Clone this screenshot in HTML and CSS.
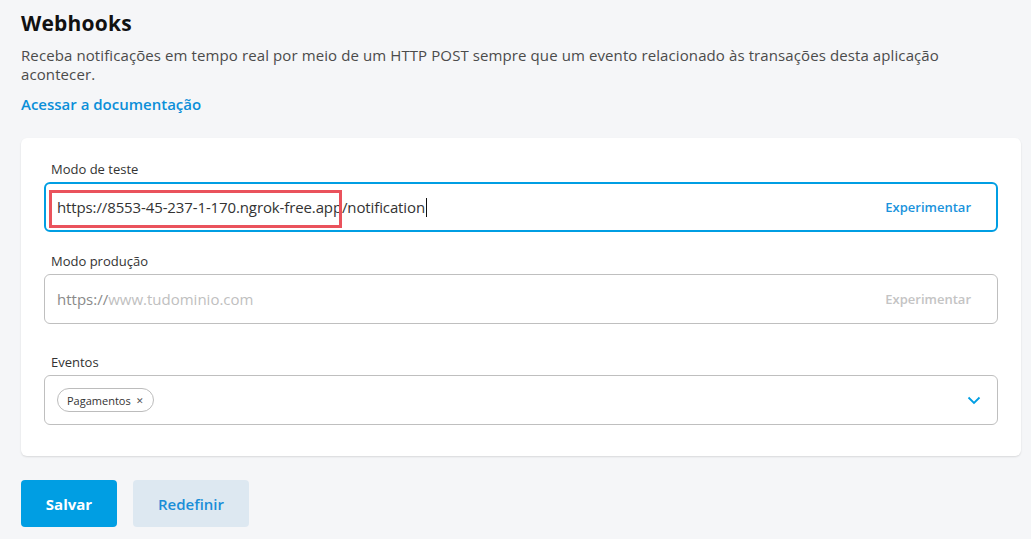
FILE: index.html
```html
<!DOCTYPE html>
<html lang="pt-BR">
<head>
<meta charset="utf-8">
<title>Webhooks</title>
<link rel="stylesheet" href="styles.css">
</head>
<body>
<main class="page">
  <h1 class="title">Webhooks</h1>
  <p class="desc">Receba notificações em tempo real por meio de um HTTP POST sempre que um evento relacionado às transações desta aplicação acontecer.</p>
  <a class="doc-link" href="#">Acessar a documentação</a>

  <section class="card">
    <div class="field">
      <label class="label">Modo de teste</label>
      <div class="input input-focus">
        <span class="value">https://8553-45-237-1-170.ngrok-free.app/notification<span class="caret"></span></span>
        <span class="action">Experimentar</span>
        <span class="highlight"></span>
      </div>
    </div>
    <div class="field">
      <label class="label">Modo produção</label>
      <div class="input">
        <span class="placeholder"><span class="prefix">https://</span>www.tudominio.com</span>
        <span class="action action-disabled">Experimentar</span>
      </div>
    </div>
    <div class="field field-events">
      <label class="label">Eventos</label>
      <div class="input select">
        <span class="chip">Pagamentos <span class="chip-x">&#x2715;</span></span>
        <svg class="chevron" width="14" height="9" viewBox="0 0 14 9"><path d="M1.5 1.5 L7 7 L12.5 1.5" fill="none" stroke="#009ee3" stroke-width="1.8"/></svg>
      </div>
    </div>
  </section>

  <div class="buttons">
    <button class="btn btn-primary">Salvar</button>
    <button class="btn btn-secondary">Redefinir</button>
  </div>
</main>
</body>
</html>
```

FILE: styles.css
```css
* { box-sizing: border-box; }
html, body { margin: 0; padding: 0; }
body {
  background: #f5f6f8;
  font-family: "Open Sans", "Liberation Sans", sans-serif;
  color: #333;
}
.page {
  padding: 9px 10px 0 21px;
}
.title {
  margin: 0;
  font-size: 21px;
  font-weight: 700;
  line-height: 28px;
  color: #111;
  letter-spacing: 0.2px;
}
.desc {
  margin: 9px 0 0;
  font-size: 15px;
  line-height: 19px;
  color: #4b4b4b;
  max-width: 960px;
  letter-spacing: 0.1px;
}
.doc-link {
  display: inline-block;
  margin-top: 10px;
  font-size: 15px;
  line-height: 20px;
  color: #0b8fd8;
  font-weight: 600;
  text-decoration: none;
}
.card {
  margin-top: 23px;
  width: 1000px;
  background: #fff;
  border-radius: 6px;
  box-shadow: 0 1px 2px rgba(0,0,0,0.12);
  padding: 22px 23px 31px;
}
.field + .field { margin-top: 20px; }
.field-events { margin-top: 29px !important; }
.label {
  display: block;
  padding-left: 7px;
  font-size: 13px;
  line-height: 18px;
  color: #333;
  margin-bottom: 4px;
}
.input {
  position: relative;
  height: 50px;
  border: 1px solid #bfbfbf;
  border-radius: 6px;
  display: flex;
  align-items: center;
  justify-content: space-between;
  padding: 0 26px 0 12px;
}
.input-focus {
  border: 2px solid #009ee3;
  padding: 0 25px 0 11px;
}
.value {
  font-size: 15px;
  color: #333;
  display: flex;
  align-items: center;
  letter-spacing: -0.12px;
}
.caret {
  display: inline-block;
  width: 1px;
  height: 19px;
  background: #111;
  margin-left: 1px;
}
.placeholder {
  font-size: 15px;
  color: #c0c0c0;
}
.prefix { color: #8a8a8a; }
.action {
  font-size: 13px;
  font-weight: 600;
  color: #1a93dc;
}
.action-disabled { color: #c4c4c4; }
.highlight {
  position: absolute;
  left: 3px;
  top: 6px;
  width: 293px;
  height: 38px;
  border: 3px solid #ea525c;
  pointer-events: none;
}
.select { padding: 0 15px 0 12px; }
.chip {
  display: inline-flex;
  align-items: center;
  height: 24px;
  padding: 0 9px;
  border: 1px solid #bcbcbc;
  border-radius: 12px;
  font-size: 11px;
  color: #333;
}
.chip-x { margin-left: 5px; font-size: 9px; color: #555; }
.chevron { margin-right: 1px; }
.buttons {
  display: flex;
  gap: 16px;
  margin-top: 24px;
}
.btn {
  height: 47px;
  border: none;
  border-radius: 4px;
  font-family: inherit;
  font-size: 15px;
  font-weight: 700;
}
.btn-primary {
  width: 96px;
  background: #009ee3;
  color: #fff;
}
.btn-secondary {
  width: 116px;
  background: #dde8f1;
  color: #1a8ed8;
  font-weight: 600;
}
```
